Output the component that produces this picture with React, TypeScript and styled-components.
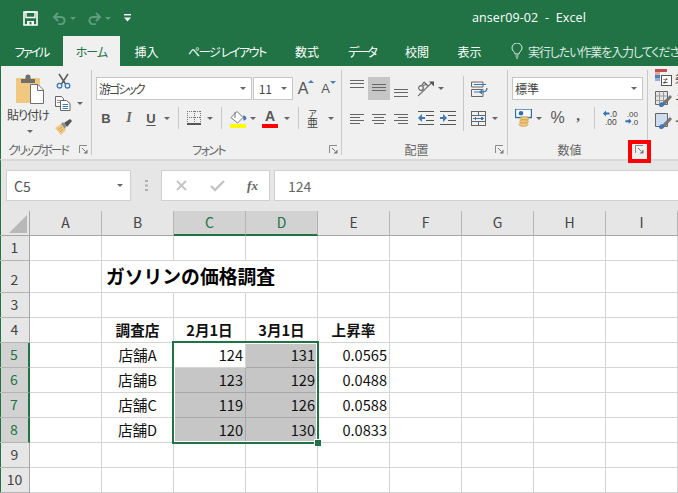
import React from "react";
import styled, { createGlobalStyle } from "styled-components";

const GREEN = "#217346";
const JP = `"Noto Sans CJK JP", "Noto Sans", sans-serif`;

const Global = createGlobalStyle`
  html, body { margin: 0; padding: 0; background: #fff; }
  * { box-sizing: border-box; }
`;

const Page = styled.div`
  position: relative;
  width: 678px;
  height: 493px;
  overflow: hidden;
  font-family: ${JP};
  white-space: nowrap;
`;

const TitleBar = styled.header`
  height: 36px;
  background: ${GREEN};
  display: flex;
  align-items: center;
`;
const Qat = styled.div`
  width: 472px;
  padding-left: 22px;
  display: flex;
  align-items: center;
`;
const QatSlot = styled.span<{ $w: number }>`
  width: ${(p) => p.$w}px;
  display: flex;
  justify-content: center;
  align-items: center;
`;
const Title = styled.div`
  color: #fff;
  font: 12.5px "Open Sans", sans-serif;
  white-space: pre;
  letter-spacing: 0.1px;
  padding-bottom: 1px;
`;

const TabBar = styled.nav`
  height: 30px;
  background: ${GREEN};
  display: flex;
`;
const Tab = styled.div<{ $w: number; $active?: boolean; $ls: number }>`
  width: ${(p) => p.$w}px;
  flex-shrink: 0;
  display: flex;
  align-items: center;
  justify-content: center;
  font-size: 12px;
  font-feature-settings: "palt";
  letter-spacing: ${(p) => p.$ls}px;
  color: ${(p) => (p.$active ? GREEN : "#fff")};
  background: ${(p) => (p.$active ? "#f0f0f0" : "transparent")};
`;
const TellMe = styled.div`
  display: flex;
  align-items: center;
  gap: 5px;
  padding-left: 15px;
  color: #dfe9e3;
  font-size: 12px;
  letter-spacing: -1.1px;
  font-feature-settings: "palt";
`;

const Ribbon = styled.section`
  height: 93px;
  background: #f0f0f0;
  border-left: 1px solid ${GREEN};
  display: flex;
  align-items: flex-start;
`;
const Group = styled.div<{ $w: number }>`
  width: ${(p) => p.$w}px;
  height: 85px;
  margin-top: 4px;
  border-right: 1px solid #c8c8c8;
  display: flex;
  flex-direction: column;
  flex-shrink: 0;
`;
const GroupBody = styled.div`
  flex: 1;
  display: flex;
  min-height: 0;
`;
const GroupFoot = styled.div`
  height: 11px;
  display: flex;
  align-items: center;
`;
const GroupName = styled.span<{ $ls?: number }>`
  flex: 1;
  margin-right: 4px;
  text-align: center;
  font-size: 12px;
  line-height: 11px;
  color: #666;
  letter-spacing: ${(p) => p.$ls ?? 0}px;
  font-feature-settings: "palt";
`;
const Launcher = styled.svg`
  width: 9px;
  height: 9px;
  margin-right: 3px;
  flex-shrink: 0;
`;
const Stack = styled.div<{ $w?: number; $pl?: number }>`
  width: ${(p) => (p.$w ? `${p.$w}px` : "auto")};
  padding-left: ${(p) => p.$pl ?? 0}px;
  padding-top: 7px;
  display: flex;
  flex-direction: column;
  gap: 7px;
`;
const Row = styled.div`
  height: 23px;
  display: flex;
  align-items: center;
`;
const LowRow = styled(Row)`
  height: 22px;
`;
const Cell = styled.div<{ $w: number; $on?: boolean }>`
  width: ${(p) => p.$w}px;
  height: 100%;
  flex-shrink: 0;
  display: flex;
  justify-content: center;
  align-items: center;
  background: ${(p) => (p.$on ? "#c6c6c6" : "transparent")};
`;
const Caret = styled.i<{ $c?: string }>`
  display: block;
  width: 0;
  height: 0;
  border-left: 3.5px solid transparent;
  border-right: 3.5px solid transparent;
  border-top: 3.5px solid ${(p) => p.$c ?? "#666"};
`;
const RowSep = styled.div`
  width: 1px;
  height: 22px;
  background: #c8c8c8;
  flex-shrink: 0;
`;
const TallSep = styled.div`
  width: 1px;
  height: 55px;
  margin-top: 6px;
  background: #c8c8c8;
  flex-shrink: 0;
`;
const PasteColumn = styled.div`
  width: 50px;
  padding: 4px 0 0 15px;
  display: flex;
  flex-direction: column;
  align-items: flex-start;
`;
const PasteText = styled.span`
  font-size: 12px;
  line-height: 14px;
  margin: 4px 0 0 -9px;
  color: #444;
  letter-spacing: -1px;
  font-feature-settings: "palt";
`;
const PasteCaret = styled.span`
  margin: 8px 0 0 11px;
`;
const SmallColumn = styled.div`
  margin-top: -1px;
  display: flex;
  flex-direction: column;
`;
const SmallRow = styled.div`
  height: 23px;
  display: flex;
  align-items: center;
`;
const Field = styled.div<{ $w: number }>`
  width: ${(p) => p.$w}px;
  height: 23px;
  margin-right: 1px;
  background: #fff;
  border: 1px solid #c6c6c6;
  display: flex;
  align-items: center;
  padding: 0 5px 0 2px;
  font-size: 12px;
  color: #444;
  font-feature-settings: "palt";
`;
const FieldText = styled.span<{ $ls?: number }>`
  flex: 1;
  letter-spacing: ${(p) => p.$ls ?? 0}px;
`;
const BoldGlyph = styled.span`
  font: bold 13px "Liberation Sans", sans-serif;
  color: #555;
`;
const ItalicGlyph = styled.span`
  font: italic bold 14px "Liberation Serif", serif;
  color: #666;
`;
const UnderGlyph = styled(BoldGlyph)`
  text-decoration: underline;
  text-underline-offset: 2px;
`;
const SizeGlyph = styled.span<{ $s: number }>`
  display: flex;
  align-items: flex-start;
  font: ${(p) => p.$s}px/1 "Liberation Sans", sans-serif;
  color: #555;
`;
const Tip = styled.i<{ $down?: boolean }>`
  display: block;
  width: 0;
  height: 0;
  margin-top: -1px;
  border-left: 3px solid transparent;
  border-right: 3px solid transparent;
  ${(p) =>
    p.$down ? "border-top: 3px solid #4a7fb5;" : "border-bottom: 3px solid #4a7fb5;"}
`;
const ColorStack = styled.div`
  display: flex;
  flex-direction: column;
  align-items: center;
  padding-top: 2px;
`;
const ColorBar = styled.i<{ $c: string }>`
  display: block;
  width: 16px;
  height: 4px;
  background: ${(p) => p.$c};
`;
const ColorA = styled.span`
  font: bold 14px/13px "Liberation Sans", sans-serif;
  color: #555;
  margin-bottom: 1px;
`;
const Furigana = styled.div`
  display: flex;
  flex-direction: column;
  align-items: center;
  color: #444;
  line-height: 9px;
`;
const FuriTop = styled.span`
  font-size: 9px;
`;
const FuriBase = styled.span`
  font-size: 11px;
`;
const Percent = styled.span`
  font: 16px "Liberation Sans", sans-serif;
  color: #555;
`;
const Comma = styled.span`
  font: bold 15px "Liberation Serif", serif;
  color: #555;
  padding-bottom: 5px;
`;
const StyleColumn = styled.div`
  padding-left: 7px;
  display: flex;
  flex-direction: column;
`;
const StyleRow = styled.div`
  height: 22px;
  display: flex;
  align-items: center;
  gap: 3px;
  font-size: 12px;
  color: #444;
`;

const FormulaBar = styled.section`
  height: 52px;
  background: #e6e6e6;
  border-top: 2px solid #d8d8d8;
  border-left: 1px solid ${GREEN};
  padding: 9px 0 0 5px;
  display: flex;
  align-items: flex-start;
`;
const NameBox = styled.div`
  width: 125px;
  height: 31px;
  background: #fff;
  border: 1px solid #d0d0d0;
  display: flex;
  align-items: center;
  padding: 0 7px 0 7px;
  font-size: 14px;
  color: #555;
`;
const NameText = styled.span`
  flex: 1;
`;
const Grip = styled.div`
  width: 30px;
  height: 31px;
  display: flex;
  justify-content: center;
  align-items: center;
`;
const FxBox = styled.div`
  width: 109px;
  height: 31px;
  background: #fff;
  border: 1px solid #d0d0d0;
  display: flex;
  align-items: center;
  justify-content: space-around;
  margin-right: 4px;
  padding: 0 0 0 2px;
`;
const FxGlyph = styled.span`
  font: italic bold 13px "Liberation Serif", serif;
  color: #666;
`;
const Input = styled.div`
  flex: 1;
  height: 31px;
  background: #fff;
  border: 1px solid #d0d0d0;
  border-right: none;
  padding-left: 13px;
  display: flex;
  align-items: center;
  font-size: 14px;
  color: #666;
`;

const Sheet = styled.section`
  position: relative;
  display: grid;
  grid-template-columns: 30px repeat(9, 72px);
  grid-template-rows: 25px 25px 32px repeat(8, 25px);
  height: 282px;
  background: #fff;
`;
const Corner = styled.div`
  background: #e6e6e6;
  border-right: 1px solid #a6a6a6;
  border-bottom: 1px solid #a6a6a6;
  box-shadow: inset 1px 0 0 ${GREEN};
  display: flex;
  align-items: flex-end;
  justify-content: flex-end;
  padding: 0 2px 2px 0;
`;
const ColHead = styled.div<{ $on?: boolean }>`
  display: flex;
  align-items: center;
  justify-content: center;
  font-size: 14px;
  padding-bottom: 2px;
  background: ${(p) => (p.$on ? "#d2d2d2" : "#e6e6e6")};
  color: ${(p) => (p.$on ? GREEN : "#444")};
  border-right: 1px solid #b4b4b4;
  border-bottom: ${(p) => (p.$on ? `2px solid ${GREEN}` : "1px solid #a6a6a6")};
`;
const RowHead = styled.div<{ $on?: boolean }>`
  display: flex;
  align-items: flex-end;
  justify-content: center;
  font-size: 14px;
  line-height: 24px;
  padding-bottom: 1px;
  background: ${(p) => (p.$on ? "#d2d2d2" : "#e6e6e6")};
  color: ${(p) => (p.$on ? GREEN : "#444")};
  border-bottom: 1px solid #b4b4b4;
  border-right: ${(p) => (p.$on ? `2px solid ${GREEN}` : "1px solid #a6a6a6")};
  box-shadow: inset 1px 0 0 ${GREEN};
`;
const SheetCell = styled.div<{
  $align?: string;
  $fill?: boolean;
  $bold?: boolean;
  $open?: boolean;
}>`
  display: flex;
  align-items: center;
  min-width: 0;
  justify-content: ${(p) => p.$align ?? "flex-start"};
  padding: 0 2px 1px;
  font-size: 14.6px;
  font-weight: ${(p) => (p.$bold ? 700 : 400)};
  color: #111;
  background: ${(p) => (p.$fill ? "#c6c6c6" : "transparent")};
  border-bottom: 1px solid ${(p) => (p.$fill ? "#a8a8a8" : "#d4d4d4")};
  border-right: 1px solid
    ${(p) => (p.$open ? "transparent" : p.$fill ? "#a8a8a8" : "#d4d4d4")};
`;
const SheetTitle = styled.span`
  font-size: 18.8px;
  font-weight: 700;
  padding: 0 0 2px 2px;
  color: #000;
`;
const Selection = styled.div`
  position: absolute;
  left: 172px;
  top: 130px;
  width: 147px;
  height: 103px;
  border: 2px solid ${GREEN};
  box-shadow: inset 0 0 0 1px #fff;
  pointer-events: none;
`;
const Handle = styled.i`
  position: absolute;
  right: -4px;
  bottom: -4px;
  width: 7px;
  height: 7px;
  background: ${GREEN};
  border-left: 1px solid #fff;
  border-top: 1px solid #fff;
`;
const Callout = styled.div`
  position: absolute;
  left: 628px;
  top: 140px;
  width: 23px;
  height: 23px;
  border: 4px solid #f00;
`;

const Save = () => (
  <svg width="15" height="15" viewBox="0 0 15 15">
    <path d="M1 1h13v13H1z" fill="none" stroke="#fff" strokeWidth="1.6" />
    <path d="M3 1h9v5.5H3z" fill="none" stroke="#fff" strokeWidth="1.4" />
    <path d="M4 10h7v4H4z" fill="#fff" />
    <path d="M6.5 10.8h2v2.6h-2z" fill={GREEN} />
  </svg>
);
const Undo = ({ flip }: { flip?: boolean }) => (
  <svg width="15" height="13" viewBox="0 0 15 13">
    <g
      transform={flip ? "matrix(-1 0 0 1 15 0)" : undefined}
      fill="none"
      stroke="#5f9d7f"
      strokeWidth="2"
    >
      <path d="M6 1 2 5l4 4" />
      <path d="M2 5h7a3.6 3.6 0 0 1 0 7.2H6" />
    </g>
  </svg>
);
const Customize = () => (
  <svg width="7" height="8" viewBox="0 0 7 8">
    <path d="M0 0h7v1.4H0z" fill="#fff" />
    <path d="M0 3.4h7L3.5 7.4z" fill="#fff" />
  </svg>
);
const Bulb = () => (
  <svg width="12" height="16" viewBox="0 0 12 16" fill="none" stroke="#e4ece7">
    <path d="M4 11c0-2-3-3.2-3-6a5 5 0 0 1 10 0c0 2.800-3 4-3 6z" />
    <path d="M4.500 13h3M5 15h2" />
  </svg>
);
const LaunchIcon = () => (
  <Launcher viewBox="0 0 9 9">
    <path d="M.5 8V.5H8" fill="none" stroke="#8a8a8a" />
    <path d="M3 3l3 3" stroke="#777" strokeWidth="1" />
    <path d="M8.500 4.500v4h-4z" fill="#777" />
  </Launcher>
);
const PasteIcon = () => (
  <svg width="28" height="30" viewBox="0 0 28 30">
    <rect x="0" y="4" width="24" height="25" rx="1" fill="#f0c87f" />
    <path d="M5 9V5h4.500V2.500a2.500 2 0 0 1 5 0V5H19v4z" fill="#6f6f6f" />
    <path d="M14.500 10.500h7.500l5.500 5.500v13.500h-13z" fill="#fff" stroke="#707070" />
    <path d="M21.500 10.500v6h6" fill="none" stroke="#707070" />
  </svg>
);
const Scissors = () => (
  <svg width="15" height="16" viewBox="0 0 15 16" fill="none">
    <path d="M3 1l6.500 10M12 1L5.500 11" stroke="#555" strokeWidth="1.400" />
    <circle cx="3.500" cy="12.700" r="2.300" stroke="#3f78b2" strokeWidth="1.300" />
    <circle cx="11.500" cy="12.700" r="2.300" stroke="#3f78b2" strokeWidth="1.300" />
  </svg>
);
const CopyIcon = () => (
  <svg width="16" height="15" viewBox="0 0 16 15" fill="none" stroke="#666">
    <path d="M.5.500h6l2 2v8h-8z" fill="#f7f7f7" />
    <path d="M5.500 4.500h6l3.500 3v7h-9.500z" fill="#fff" />
    <path d="M7.500 8.500h5.500M7.500 10.500h5.500M7.500 12.500h5.500" stroke="#3f78b2" />
    <path d="M2 4.500h3M2 6.500h3" stroke="#999" />
  </svg>
);
const Brush = () => (
  <svg width="17" height="16" viewBox="0 0 17 16">
    <path d="M0 9l6-4 5 6-5 5C4 14 2 11 0 9z" fill="#f0c87f" />
    <path d="M3 11l4-3M5 13l3-3" stroke="#c9a05c" fill="none" />
    <path d="M6 5l2-2 3 4-1 3z" fill="#8d8d8d" />
    <path d="M9 4l6-4 2 2-5 6z" fill="#555" />
  </svg>
);
const BorderIcon = () => (
  <svg width="14" height="14" viewBox="0 0 14 14" shapeRendering="crispEdges">
    <g stroke="#777" strokeDasharray="1 1" fill="none">
      <path d="M.5 0v12M7 0v12M13.500 0v12M0 .5h14M0 6.500h14" />
    </g>
    <path d="M0 13h14" stroke="#555" strokeWidth="1.200" />
  </svg>
);
const BucketIcon = () => (
  <svg width="18" height="13" viewBox="0 0 18 13">
    <path d="M8 .5l6 6-5.500 5.500L2 6.500z" fill="#fff" stroke="#777" />
    <path d="M6 1v6" stroke="#777" />
    <path d="M14 4.500c2 0 3.500 1 3.500 3.500-1 .500-2 2-3 1.500z" fill="#3f78b2" />
  </svg>
);
const Lines = ({ rows, w = 14, h = 23 }: { rows: [number, number, number][]; w?: number; h?: number }) => (
  <svg width={w} height={h} viewBox={`0 0 ${w} ${h}`} shapeRendering="crispEdges">
    {rows.map(([x, y, l], i) => (
      <rect key={i} x={x} y={y} width={l} height="1" fill="#666" />
    ))}
  </svg>
);
const Orient = () => (
  <svg width="18" height="17" viewBox="0 0 18 17" fill="none">
    <path d="M1 16L15.500 2" stroke="#777" strokeWidth="1.200" />
    <path d="M12 1.500h5v5z" fill="#555" />
    <circle cx="4" cy="8" r="2.300" stroke="#666" strokeWidth="1.200" />
    <path d="M7 2l-2 3M7 2l4 4M6 5.500l3-1" stroke="#666" strokeWidth="1.200" />
  </svg>
);
const Indent = ({ flip }: { flip?: boolean }) => (
  <svg width="16" height="14" viewBox="0 0 16 14" shapeRendering="crispEdges">
    <path d="M0 0h16v1H0zM0 13h16v1H0zM8 4.200h8v1H8zM8 8.800h8v1H8z" fill="#555" />
    <g transform={flip ? "" : "matrix(-1 0 0 1 7 0)"}>
      <path d="M0 6h3V3l4 4-4 4V8H0z" fill="#3f78b2" shapeRendering="auto" />
    </g>
  </svg>
);
const Wrap = () => (
  <svg width="17" height="16" viewBox="0 0 17 16" fill="none">
    <path d="M.5 1h11.500v5H.5zM.5 8.500h11.500v7H.5z" stroke="#666" />
    <path d="M3 3.500h12M3 11h7" stroke="#3f78b2" />
    <path d="M16 7c0 3-2 4-5 4" stroke="#3f78b2" strokeWidth="1.300" />
    <path d="M11 8.500v5l-3-2.500z" fill="#3f78b2" />
  </svg>
);
const Merge = () => (
  <svg width="15" height="15" viewBox="0 0 15 15" fill="none" shapeRendering="crispEdges">
    <path d="M.5.500h14v14H.5zM.5 4.500h14M.5 10.500h14M7.500.500v4M7.500 10.500v4" stroke="#666" />
    <path d="M2 7.500h11" stroke="#3f78b2" />
    <path d="M5 5.500v4L2 7.500zM10 5.500v4l3-2z" fill="#3f78b2" />
  </svg>
);
const Money = () => (
  <svg width="17" height="18" viewBox="0 0 17 18">
    <rect x=".5" y="0" width="16" height="8.500" fill="#fff" stroke="#2f6fb0" strokeWidth="1.400" />
    <circle cx="6" cy="4.200" r="2.300" fill="#2f6fb0" />
    <ellipse cx="9.500" cy="9.500" rx="4.500" ry="1.800" fill="#f0c87f" stroke="#c9963a" strokeWidth=".7" />
    <ellipse cx="9" cy="12.500" rx="4.500" ry="1.800" fill="#f0c87f" stroke="#c9963a" strokeWidth=".7" />
    <ellipse cx="8.500" cy="15.500" rx="4.500" ry="1.800" fill="#f0c87f" stroke="#c9963a" strokeWidth=".7" />
  </svg>
);
const Decimal = ({ more }: { more?: boolean }) => (
  <svg width="15" height="16" viewBox="0 0 15 16" fontFamily="Liberation Sans, sans-serif" fontSize="8.500" fill="#444">
    {more ? (
      <>
        <path d="M0 3.500l3-3v2h3.500v2H3v2z" fill="#2f6fb0" />
        <text x="7" y="7">.0</text>
        <text x="2" y="15">.00</text>
      </>
    ) : (
      <>
        <text x="2" y="7">.00</text>
        <path d="M7 11.500l-3-3v2H.500v2H4v2z" fill="#2f6fb0" />
        <text x="7" y="15">.0</text>
      </>
    )}
  </svg>
);
const CondIcon = () => (
  <svg width="17" height="17" viewBox="0 0 17 17" shapeRendering="crispEdges">
    <path d="M0 0h12v3H0z" fill="#c0504d" />
    <path d="M0 3h5v3H0z" fill="#e9a59c" />
    <path d="M0 6h5v3H0z" fill="#4f81bd" />
    <path d="M0 9h5v3H0z" fill="#8fb0d8" />
    <path d="M6.500 6.500h10v10h-10z" fill="#fff" stroke="#555" />
    <text x="8" y="15" fontSize="9" fill="#333" fontFamily="Liberation Sans, sans-serif">≠</text>
  </svg>
);
const TableIcon = ({ plain }: { plain?: boolean }) => (
  <svg width="17" height="17" viewBox="0 0 17 17" fill="none">
    <path d="M.5.500h12v13H.5z" fill={plain ? "#cddcef" : "#e6e6e6"} stroke="#666" />
    {!plain && <path d="M.5 5h12M.5 9.500h12M4.500.500v13M8.500.500v13" stroke="#999" />}
    <path d="M7 12l8-8 2 2-7 8z" fill="#777" />
    <path d="M4 15c0-3 2-4.500 4-3.500s2 3 0 4-3 .500-4-.500z" fill="#3f78b2" />
  </svg>
);
const Cross = () => (
  <svg width="13" height="13" viewBox="0 0 13 13">
    <path d="M2 2l9 9M11 2l-9 9" stroke="#c4c4c4" strokeWidth="1.800" />
  </svg>
);
const Check = () => (
  <svg width="15" height="12" viewBox="0 0 15 12">
    <path d="M1 6l4 4 9-9" fill="none" stroke="#c4c4c4" strokeWidth="2.400" />
  </svg>
);
const GripDots = () => (
  <svg width="3" height="11" viewBox="0 0 3 11">
    <path d="M0 0h3v2H0zM0 4.500h3v2H0zM0 9h3v2H0z" fill="#b0b0b0" />
  </svg>
);
const CornerMark = () => (
  <svg width="18" height="18" viewBox="0 0 18 18">
    <path d="M18 0v18H0z" fill="#b8b8b8" />
  </svg>
);

const TABS: [string, number, number][] = [
  ["ファイル", 63, -2],
  ["ホーム", 57, -1],
  ["挿入", 53, 0],
  ["ページ レイアウト", 108, -1.4],
  ["数式", 52, 0],
  ["データ", 58, -2],
  ["校閲", 52, 0],
  ["表示", 53, 0],
];
const COLUMNS = ["A", "B", "C", "D", "E", "F", "G", "H", "I"];

type Mark = { text?: string; kind?: "title" | "head" | "center" | "num"; fill?: boolean; open?: boolean };
const DATA: Record<string, Mark> = {
  B2: { text: "ガソリンの価格調査", kind: "title", open: true },
  C2: { open: true },
  B4: { text: "調査店", kind: "head" },
  C4: { text: "2月1日", kind: "head" },
  D4: { text: "3月1日", kind: "head" },
  E4: { text: "上昇率", kind: "head" },
  B5: { text: "店舗A", kind: "center" },
  C5: { text: "124", kind: "num" },
  D5: { text: "131", kind: "num", fill: true },
  E5: { text: "0.0565", kind: "num" },
  B6: { text: "店舗B", kind: "center" },
  C6: { text: "123", kind: "num", fill: true },
  D6: { text: "129", kind: "num", fill: true },
  E6: { text: "0.0488", kind: "num" },
  B7: { text: "店舗C", kind: "center" },
  C7: { text: "119", kind: "num", fill: true },
  D7: { text: "126", kind: "num", fill: true },
  E7: { text: "0.0588", kind: "num" },
  B8: { text: "店舗D", kind: "center" },
  C8: { text: "120", kind: "num", fill: true },
  D8: { text: "130", kind: "num", fill: true },
  E8: { text: "0.0833", kind: "num" },
};
const alignOf = (k?: Mark["kind"]) =>
  k === "num" ? "flex-end" : k === "center" || k === "head" ? "center" : "flex-start";

export default function App() {
  return (
    <Page>
      <Global />
      <TitleBar>
        <Qat>
          <QatSlot $w={16}><Save /></QatSlot>
          <QatSlot $w={13} />
          <QatSlot $w={17}><Undo /></QatSlot>
          <QatSlot $w={10}><Caret $c="#5f9d7f" /></QatSlot>
          <QatSlot $w={8} />
          <QatSlot $w={17}><Undo flip /></QatSlot>
          <QatSlot $w={10}><Caret $c="#5f9d7f" /></QatSlot>
          <QatSlot $w={10} />
          <QatSlot $w={9}><Customize /></QatSlot>
        </Qat>
        <Title>anser09-02  -  Excel</Title>
      </TitleBar>

      <TabBar>
        {TABS.map(([t, w, ls], i) => (
          <Tab key={t} $w={w} $ls={ls} $active={i === 1}>{t}</Tab>
        ))}
        <TellMe><Bulb />実行したい作業を入力してください</TellMe>
      </TabBar>

      <Ribbon>
        <Group $w={91}>
          <GroupBody>
            <PasteColumn>
              <PasteIcon />
              <PasteText>貼り付け</PasteText>
              <PasteCaret><Caret /></PasteCaret>
            </PasteColumn>
            <SmallColumn>
              <SmallRow><Cell $w={24}><Scissors /></Cell></SmallRow>
              <SmallRow>
                <Cell $w={24}><CopyIcon /></Cell>
                <Cell $w={10}><Caret /></Cell>
              </SmallRow>
              <SmallRow><Cell $w={24}><Brush /></Cell></SmallRow>
            </SmallColumn>
          </GroupBody>
          <GroupFoot><GroupName $ls={-2}>クリップボード</GroupName><LaunchIcon /></GroupFoot>
        </Group>

        <Group $w={250}>
          <GroupBody>
            <Stack $pl={4}>
              <Row>
                <Field $w={156}><FieldText $ls={-2}>游ゴシック</FieldText><Caret /></Field>
                <Field $w={40}><FieldText>&nbsp;11</FieldText><Caret /></Field>
                <Cell $w={24}><SizeGlyph $s={16}>A<Tip /></SizeGlyph></Cell>
                <Cell $w={21}><SizeGlyph $s={13}>A<Tip $down /></SizeGlyph></Cell>
              </Row>
              <LowRow>
                <Cell $w={20}><BoldGlyph>B</BoldGlyph></Cell>
                <Cell $w={3} />
                <Cell $w={20}><ItalicGlyph>I</ItalicGlyph></Cell>
                <Cell $w={2} />
                <Cell $w={20}><UnderGlyph>U</UnderGlyph></Cell>
                <Cell $w={12}><Caret /></Cell>
                <Cell $w={5} />
                <RowSep />
                <Cell $w={4} />
                <Cell $w={21}><BorderIcon /></Cell>
                <Cell $w={12}><Caret /></Cell>
                <Cell $w={5} />
                <RowSep />
                <Cell $w={4} />
                <Cell $w={23}>
                  <ColorStack><BucketIcon /><ColorBar $c="#ff0" /></ColorStack>
                </Cell>
                <Cell $w={8}><Caret /></Cell>
                <Cell $w={26}>
                  <ColorStack><ColorA>A</ColorA><ColorBar $c="#f00" /></ColorStack>
                </Cell>
                <Cell $w={8}><Caret /></Cell>
                <Cell $w={7} />
                <RowSep />
                <Cell $w={27}>
                  <Furigana><FuriTop>ア</FuriTop><FuriBase>亜</FuriBase></Furigana>
                </Cell>
                <Cell $w={9}><Caret /></Cell>
              </LowRow>
            </Stack>
          </GroupBody>
          <GroupFoot><GroupName $ls={-1.7}>フォント</GroupName><LaunchIcon /></GroupFoot>
        </Group>

        <Group $w={166}>
          <GroupBody>
            <Stack $w={121} $pl={4}>
              <Row>
                <Cell $w={22}><Lines rows={[[0, 3, 14], [0, 6, 14], [0, 10, 14]]} /></Cell>
                <Cell $w={22} $on><Lines rows={[[0, 7, 14], [0, 10, 14], [0, 13, 14]]} /></Cell>
                <Cell $w={22}><Lines rows={[[0, 12, 14], [0, 15, 14], [0, 19, 14]]} /></Cell>
                <Cell $w={3} />
                <Cell $w={22}><Orient /></Cell>
                <Cell $w={8}><Caret /></Cell>
              </Row>
              <LowRow>
                <Cell $w={22}><Lines h={22} rows={[[0, 7, 14], [0, 10, 10], [0, 13, 14], [0, 16, 10]]} /></Cell>
                <Cell $w={22}><Lines h={22} rows={[[0, 7, 14], [2, 10, 10], [0, 13, 14], [2, 16, 10]]} /></Cell>
                <Cell $w={22}><Lines h={22} rows={[[0, 7, 14], [4, 10, 10], [0, 13, 14], [4, 16, 10]]} /></Cell>
                <Cell $w={4} />
                <Cell $w={20}><Indent /></Cell>
                <Cell $w={1} />
                <Cell $w={22}><Indent flip /></Cell>
              </LowRow>
            </Stack>
            <TallSep />
            <Stack $pl={7}>
              <Row><Wrap /></Row>
              <LowRow>
                <Merge />
                <Cell $w={18}><Caret /></Cell>
              </LowRow>
            </Stack>
          </GroupBody>
          <GroupFoot><GroupName>配置</GroupName><LaunchIcon /></GroupFoot>
        </Group>

        <Group $w={140}>
          <GroupBody>
            <Stack $pl={4}>
              <Row>
                <Field $w={131}><FieldText>標準</FieldText><Caret /></Field>
              </Row>
              <LowRow>
                <Cell $w={22}><Money /></Cell>
                <Cell $w={10}><Caret /></Cell>
                <Cell $w={2} />
                <Cell $w={23}><Percent>%</Percent></Cell>
                <Cell $w={18}><Comma>,</Comma></Cell>
                <Cell $w={7} />
                <RowSep />
                <Cell $w={30}><Decimal more /></Cell>
                <Cell $w={14}><Decimal /></Cell>
              </LowRow>
            </Stack>
          </GroupBody>
          <GroupFoot><GroupName>数値</GroupName><LaunchIcon /></GroupFoot>
        </Group>

        <StyleColumn>
          <StyleRow><CondIcon />条件付き書式</StyleRow>
          <StyleRow><TableIcon />テーブルとして書式設定</StyleRow>
          <StyleRow><TableIcon plain />セルのスタイル</StyleRow>
        </StyleColumn>
      </Ribbon>

      <FormulaBar>
        <NameBox><NameText>C5</NameText><Caret /></NameBox>
        <Grip><GripDots /></Grip>
        <FxBox><Cross /><Check /><FxGlyph>fx</FxGlyph></FxBox>
        <Input>124</Input>
      </FormulaBar>

      <Sheet>
        <Corner><CornerMark /></Corner>
        {COLUMNS.map((c) => (
          <ColHead key={c} $on={c === "C" || c === "D"}>{c}</ColHead>
        ))}
        {Array.from({ length: 10 }, (_, r) => r + 1).map((r) => (
          <React.Fragment key={r}>
            <RowHead $on={r >= 5 && r <= 8}>{r}</RowHead>
            {COLUMNS.map((c) => {
              const m = DATA[`${c}${r}`] ?? {};
              return (
                <SheetCell
                  key={c}
                  $align={alignOf(m.kind)}
                  $fill={m.fill}
                  $bold={m.kind === "head"}
                  $open={m.open}
                >
                  {m.kind === "title" ? <SheetTitle>{m.text}</SheetTitle> : m.text}
                </SheetCell>
              );
            })}
          </React.Fragment>
        ))}
        <Selection><Handle /></Selection>
      </Sheet>

      <Callout />
    </Page>
  );
}
